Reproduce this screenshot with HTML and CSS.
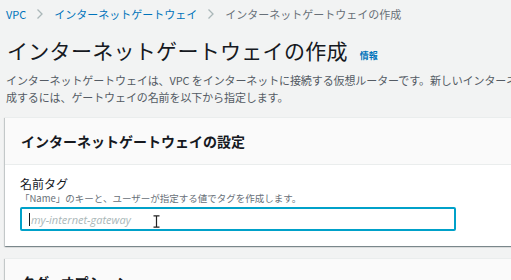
FILE: index.html
```html
<!DOCTYPE html>
<html lang="ja">
<head>
    <meta charset="utf-8">
    <title>インターネットゲートウェイの作成</title>
    <link rel="stylesheet" href="styles.css">
</head>
<body>
    <div class="page">
        <nav class="crumbs">
            <a class="crumb-link">VPC</a>
            <svg class="chev" width="8" height="12" viewBox="0 0 8 12"><path d="M1.5 1.5 L6 6 L1.5 10.5" fill="none" stroke="#aab7b8" stroke-width="1.3"/></svg>
            <a class="crumb-link">インターネットゲートウェイ</a>
            <svg class="chev" width="8" height="12" viewBox="0 0 8 12"><path d="M1.5 1.5 L6 6 L1.5 10.5" fill="none" stroke="#aab7b8" stroke-width="1.3"/></svg>
            <span class="crumb-current">インターネットゲートウェイの作成</span>
        </nav>

        <div class="title-row">
            <h1 class="title">インターネットゲートウェイの作成</h1>
            <a class="info">情報</a>
        </div>

        <p class="intro">
            <span class="line">インターネットゲートウェイは、VPC をインターネットに接続する仮想ルーターです。新しいインターネットゲートウェイを作</span>
            <span class="line">成するには、ゲートウェイの名前を以下から指定します。</span>
        </p>

        <section class="card">
            <div class="card-head">インターネットゲートウェイの設定</div>
            <div class="card-body">
                <div class="field-label">名前タグ</div>
                <div class="field-desc">「Name」のキーと、ユーザーが指定する値でタグを作成します。</div>
                <div class="input">
                    <span class="caret"></span>
                    <span class="placeholder">my-internet-gateway</span>
                    <svg class="ibeam" width="7" height="13" viewBox="0 0 7 13"><path d="M0.5 0.8 H6.5 M3.5 0.8 V12.2 M0.5 12.2 H6.5" fill="none" stroke="#222" stroke-width="1.2"/></svg>
                </div>
            </div>
        </section>

        <section class="card">
            <div class="card-head">タグ - オプション</div>
        </section>
    </div>
</body>
</html>
```

FILE: styles.css
```css
html, body { margin: 0; padding: 0; }
body {
  width: 511px;
  height: 280px;
  overflow: hidden;
  background: #f2f3f3;
  font-family: "Noto Sans CJK JP", "Noto Sans", sans-serif;
  color: #16191f;
}
.page { padding: 0 0 0 6px; }

.crumbs {
  display: flex;
  align-items: center;
  gap: 10px;
  height: 27px;
  font-size: 11px;
  white-space: nowrap;
}
.crumb-link { color: #0073bb; }
.crumb-current { color: #687078; }
.chev { display: block; }

.title-row {
  display: flex;
  align-items: baseline;
  gap: 12px;
  margin-top: 8px;
  height: 32px;
}
.title {
  margin: 0 0 0 1px;
  font-size: 21px;
  font-weight: 400;
  line-height: 30px;
  color: #16191f;
  letter-spacing: 0.3px;
}
.info {
  color: #0073bb;
  font-size: 9px;
  font-weight: 700;
}

.intro {
  margin: 5px 0 0 0;
  font-size: 11px;
  line-height: 17px;
  color: #545b64;
  white-space: nowrap;
  letter-spacing: -0.1px;
}
.intro .line { display: block; }

.card {
  width: 560px;
  margin: 11px 0 0 -1px;
  background: #fff;
  border-top: 1px solid #eaeded;
  box-shadow: 0 1px 1px 0 rgba(0, 28, 36, 0.3), 1px 1px 1px 0 rgba(0, 28, 36, 0.15), -1px 1px 1px 0 rgba(0, 28, 36, 0.15);
}
.card + .card { margin-top: 12px; }
.card-head {
  height: 46px;
  padding-left: 16px;
  display: flex;
  align-items: center;
  background: #fafafa;
  border-bottom: 1px solid #eaeded;
  font-size: 14px;
  font-weight: 700;
  color: #16191f;
}
.card-body { padding: 11px 15px 15px 15px; }
.field-label {
  font-size: 12px;
  line-height: 16px;
  color: #16191f;
}
.field-desc {
  font-size: 9.5px;
  line-height: 13px;
  color: #687078;
  margin-bottom: 2px;
}
.input {
  position: relative;
  width: 425px;
  height: 20px;
  border: 2px solid #00a1c9;
  border-radius: 2px;
  display: flex;
  align-items: center;
  padding-left: 7px;
}
.caret {
  width: 1px;
  height: 13px;
  background: #16191f;
  margin-right: 1px;
}
.placeholder {
  font-family: "Open Sans", "Noto Sans", sans-serif;
  font-style: italic;
  font-size: 11px;
  color: #aab7b8;
}
.ibeam {
  position: absolute;
  left: 131px;
  top: 6px;
}
```
